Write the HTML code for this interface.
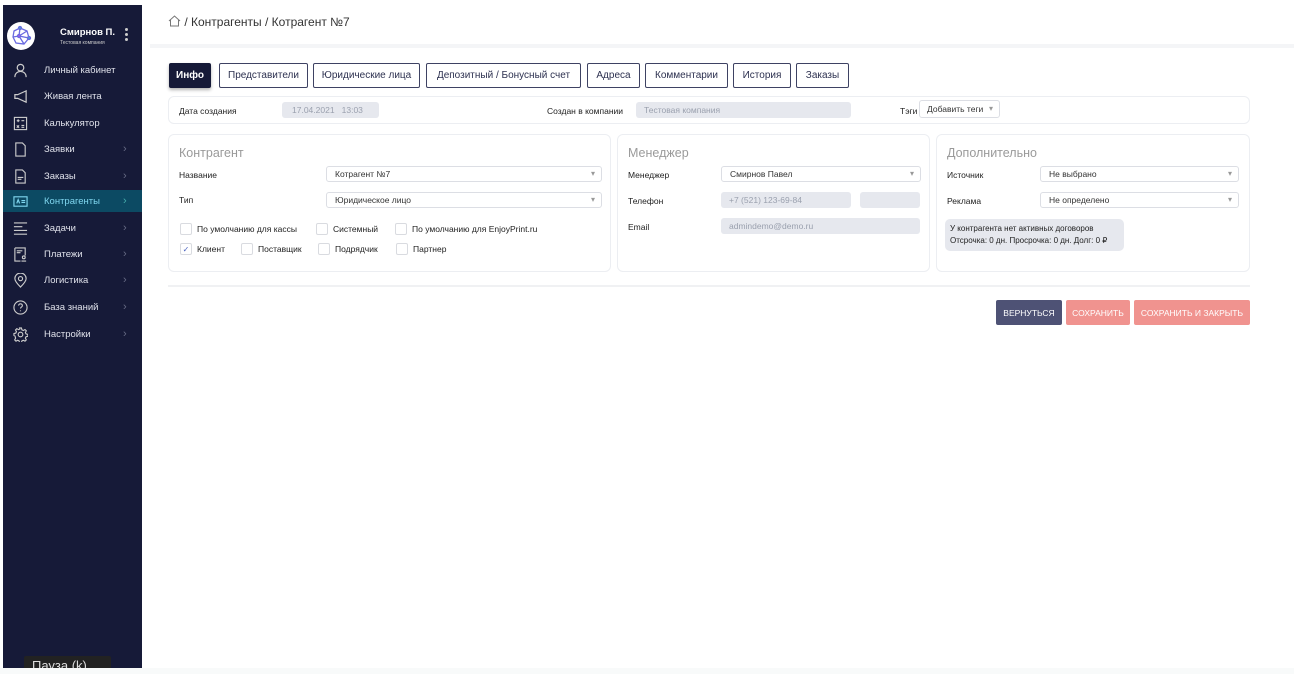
<!DOCTYPE html><html><head><meta charset="utf-8"><style>
*{box-sizing:border-box;margin:0;padding:0}
body{width:1294px;height:674px;overflow:hidden;background:#fff;font-family:"Liberation Sans",sans-serif;position:relative;font-size:9px;color:#222}
.sb{position:absolute;left:3px;top:5px;width:139px;height:663px;background:#161a38;color:#dfe1ea}
.it{position:absolute;left:0;width:139px;height:22px;display:flex;align-items:center}
.it svg{position:absolute;left:10px;width:15px;height:15px}
.it span{position:absolute;left:41px;font-size:9.5px}
.it b{position:absolute;left:120px;color:#666b85;font-weight:normal;font-size:11px}
.act{background:#0c4a63;color:#7fd6ef}
.abs{position:absolute}
.tab{position:absolute;top:63px;height:25px;border:1.5px solid #3e4263;border-radius:2px;font-size:10px;color:#2d3150;display:flex;align-items:center;justify-content:center;background:#fff}
.card{position:absolute;border:1px solid #eceef2;border-radius:6px;background:#fff}
.lbl{position:absolute;font-size:8.5px;color:#222}
.sel{position:absolute;height:16px;border:1px solid #dcdee4;border-radius:3px;font-size:8.5px;padding-left:8px;line-height:14px;color:#333}
.sel:after{content:"▾";position:absolute;right:6px;color:#999;font-size:8px}
.dis{position:absolute;height:16px;background:#e6e8ee;border-radius:3px;font-size:8.5px;color:#9aa0ae;padding-left:8px;line-height:16px}
.h{position:absolute;font-size:12.5px;color:#9a9a9a}
.cb{position:absolute;font-size:8.5px;display:flex;align-items:center}
.cb i{display:inline-block;width:12px;height:12px;border:1px solid #d9dbe0;border-radius:2px;margin-right:5px;font-style:normal;color:#4a63c0;font-size:8px;text-align:center;line-height:11px}
.btn{position:absolute;top:300px;height:25px;color:#fff;font-size:8.5px;display:flex;align-items:center;justify-content:center;border-radius:2px}
</style></head><body>
<div class="sb">
 <div class="abs" style="left:4px;top:17px;width:28px;height:28px;border-radius:50%;background:#fff"><svg width="28" height="28" viewBox="0 0 28 28" fill="none" stroke="#6a6be0" stroke-width="1.3"><path d="M7 9L13 6L20 9L22 16L17 22L9 21L6 15Z M13 6L12 14L20 9 M12 14L6 15 M12 14L17 22 M12 14L22 16"/><circle cx="13" cy="6" r="1.5" fill="#4ac"/><circle cx="12" cy="14" r="1.5" fill="#a5e"/><circle cx="22" cy="16" r="1.5" fill="#4ac"/></svg></div>
 <div class="abs" style="left:57px;top:22px;font-size:9.5px;font-weight:bold;color:#fff">Смирнов П.</div>
 <div class="abs" style="left:57px;top:35px;font-size:5px;color:#ccc">Тестовая компания</div>
 <div class="abs" style="left:122px;top:23px;width:3px;font-size:0"><div style="width:3px;height:3px;background:#ccc;border-radius:50%;margin-bottom:2px"></div><div style="width:3px;height:3px;background:#ccc;border-radius:50%;margin-bottom:2px"></div><div style="width:3px;height:3px;background:#ccc;border-radius:50%"></div></div>
 <div class="it" style="top:54px"><svg viewBox="0 0 16 16" fill="none" stroke="#ccc" stroke-width="1.3"><circle cx="8" cy="5" r="3.5"/><path d="M2 15c0-4 3-6 6-6s6 2 6 6"/></svg><span>Личный кабинет</span></div>
 <div class="it" style="top:80px"><svg viewBox="0 0 16 16" fill="none" stroke="#ccc" stroke-width="1.3"><path d="M14 2L5 6H2v4h3l9 4z"/></svg><span>Живая лента</span></div>
 <div class="it" style="top:107px"><svg viewBox="0 0 16 16" fill="none" stroke="#ccc" stroke-width="1.2"><rect x="1.5" y="1.5" width="13" height="13"/><path d="M4 5h3M5.5 3.5v3M9 5h3M4 10l2.5 2.5M6.5 10L4 12.5M9 10h3M9 12h3"/></svg><span>Калькулятор</span></div>
 <div class="it" style="top:133px"><svg viewBox="0 0 16 16" fill="none" stroke="#ccc" stroke-width="1.2"><path d="M3 1h7l3 3v11H3z"/></svg><span>Заявки</span><b>›</b></div>
 <div class="it" style="top:160px"><svg viewBox="0 0 16 16" fill="none" stroke="#ccc" stroke-width="1.2"><path d="M3 1h7l3 3v11H3zM5 9h6M5 11h4"/></svg><span>Заказы</span><b>›</b></div>
 <div class="it act" style="top:185px"><svg viewBox="0 0 16 16" fill="none" stroke="#7fd6ef" stroke-width="1.2"><rect x="1" y="3" width="14" height="10"/><path d="M4 10l1.5-4 1.5 4M9 7h4M9 9h4"/></svg><span>Контрагенты</span><b style="color:#4aa">›</b></div>
 <div class="it" style="top:212px"><svg viewBox="0 0 16 16" fill="none" stroke="#ccc" stroke-width="1.2"><path d="M1 2h14M1 6h9M1 10h14M1 14h14"/></svg><span>Задачи</span><b>›</b></div>
 <div class="it" style="top:238px"><svg viewBox="0 0 16 16" fill="none" stroke="#ccc" stroke-width="1.2"><path d="M2 1h11v8M2 1v14h6M4 4h6M4 6h4"/><circle cx="11.5" cy="11" r="1.5"/><path d="M9 15h5"/></svg><span>Платежи</span><b>›</b></div>
 <div class="it" style="top:264px"><svg viewBox="0 0 16 16" fill="none" stroke="#ccc" stroke-width="1.2"><path d="M8 15C4 11 2 8.5 2 6a6 6 0 0112 0c0 2.5-2 5-6 9z"/><circle cx="8" cy="6" r="2.2"/></svg><span>Логистика</span><b>›</b></div>
 <div class="it" style="top:291px"><svg viewBox="0 0 16 16" fill="none" stroke="#ccc" stroke-width="1.2"><circle cx="8" cy="8" r="7"/><path d="M6 6a2 2 0 114 0c0 1.5-2 1.5-2 3M8 11v1"/></svg><span>База знаний</span><b>›</b></div>
 <div class="it" style="top:318px"><svg viewBox="0 0 16 16" fill="none" stroke="#ccc" stroke-width="1.2"><circle cx="8" cy="8" r="2.5"/><path d="M7 1h2l.5 2 1.5.7 1.8-1 1.4 1.4-1 1.8.7 1.5 2 .5v2l-2 .5-.7 1.5 1 1.8-1.4 1.4-1.8-1-1.5.7-.5 2H7l-.5-2-1.5-.7-1.8 1-1.4-1.4 1-1.8L2.1 9.5 1 9V7l2-.5.7-1.5-1-1.8 1.4-1.4 1.8 1 1.5-.7z"/></svg><span>Настройки</span><b>›</b></div>
 <div class="abs" style="left:21px;top:651px;width:87px;height:14px;background:#222;border-radius:2px;color:#ddd;font-size:13px;line-height:20px;padding-left:8px;overflow:hidden">Пауза (k)</div>
</div>
<div class="abs" style="left:0;top:668px;width:1294px;height:6px;background:#f8fafa"></div>
<div class="abs" style="left:150px;top:44px;width:1144px;height:4px;background:#f4f5f7"></div>
<div class="abs" style="left:168px;top:15px;font-size:12px;color:#333"><svg width="13" height="12" viewBox="0 0 13 12" fill="none" stroke="#777" stroke-width="1" style="vertical-align:-1px"><path d="M1 6L6.5 1 12 6M2.5 5v6h8V5"/></svg> / Контрагенты / Котрагент №7</div>
<div class="tab" style="left:169px;width:42px;background:#161a38;color:#fff;border-color:#161a38;font-weight:bold;box-shadow:0 2px 3px rgba(0,0,0,.3)">Инфо</div>
<div class="tab" style="left:219px;width:89px">Представители</div>
<div class="tab" style="left:313px;width:107px">Юридические лица</div>
<div class="tab" style="left:426px;width:155px">Депозитный / Бонусный счет</div>
<div class="tab" style="left:587px;width:53px">Адреса</div>
<div class="tab" style="left:645px;width:83px">Комментарии</div>
<div class="tab" style="left:733px;width:58px">История</div>
<div class="tab" style="left:796px;width:53px">Заказы</div>
<div class="card" style="left:168px;top:96px;width:1082px;height:28px"></div>
<div class="lbl" style="left:179px;top:106px">Дата создания</div>
<div class="dis" style="left:282px;top:102px;width:97px;padding-left:10px">17.04.2021 &nbsp; 13:03</div>
<div class="lbl" style="left:547px;top:106px">Создан в компании</div>
<div class="dis" style="left:636px;top:102px;width:215px">Тестовая компания</div>
<div class="lbl" style="left:900px;top:106px">Тэги</div>
<div class="sel" style="left:919px;top:100px;width:81px;height:18px;line-height:16px;padding-left:7px">Добавить теги</div>
<div class="card" style="left:168px;top:134px;width:443px;height:138px"></div>
<div class="h" style="left:179px;top:146px">Контрагент</div>
<div class="lbl" style="left:179px;top:170px">Название</div>
<div class="sel" style="left:326px;top:166px;width:276px">Котрагент №7</div>
<div class="lbl" style="left:179px;top:195px">Тип</div>
<div class="sel" style="left:326px;top:192px;width:276px">Юридическое лицо</div>
<div class="cb" style="left:180px;top:223px"><i></i>По умолчанию для кассы</div>
<div class="cb" style="left:316px;top:223px"><i></i>Системный</div>
<div class="cb" style="left:395px;top:223px"><i></i>По умолчанию для EnjoyPrint.ru</div>
<div class="cb" style="left:180px;top:243px"><i>✓</i>Клиент</div>
<div class="cb" style="left:241px;top:243px"><i></i>Поставщик</div>
<div class="cb" style="left:318px;top:243px"><i></i>Подрядчик</div>
<div class="cb" style="left:396px;top:243px"><i></i>Партнер</div>
<div class="card" style="left:617px;top:134px;width:313px;height:138px"></div>
<div class="h" style="left:628px;top:146px">Менеджер</div>
<div class="lbl" style="left:628px;top:170px">Менеджер</div>
<div class="sel" style="left:721px;top:166px;width:200px">Смирнов Павел</div>
<div class="lbl" style="left:628px;top:196px">Телефон</div>
<div class="dis" style="left:721px;top:192px;width:130px">+7 (521) 123-69-84</div>
<div class="dis" style="left:860px;top:192px;width:60px"></div>
<div class="lbl" style="left:628px;top:222px">Email</div>
<div class="dis" style="left:721px;top:218px;width:199px">admindemo@demo.ru</div>
<div class="card" style="left:936px;top:134px;width:314px;height:138px"></div>
<div class="h" style="left:947px;top:146px">Дополнительно</div>
<div class="lbl" style="left:947px;top:170px">Источник</div>
<div class="sel" style="left:1040px;top:166px;width:199px">Не выбрано</div>
<div class="lbl" style="left:947px;top:196px">Реклама</div>
<div class="sel" style="left:1040px;top:192px;width:199px">Не определено</div>
<div class="abs" style="left:945px;top:219px;width:179px;height:32px;background:#e6e8ee;border-radius:5px;font-size:8px;padding:4px 0 0 5px;line-height:12px">У контрагента нет активных договоров<br>Отсрочка: 0 дн. Просрочка: 0 дн. Долг: 0 ₽</div>
<div class="abs" style="left:168px;top:285px;width:1082px;height:2px;background:#f0f1f3"></div>
<div class="btn" style="left:996px;width:66px;background:#4e5275">ВЕРНУТЬСЯ</div>
<div class="btn" style="left:1066px;width:64px;background:#f0938f">СОХРАНИТЬ</div>
<div class="btn" style="left:1134px;width:116px;background:#f0938f">СОХРАНИТЬ И ЗАКРЫТЬ</div>
</body></html>
